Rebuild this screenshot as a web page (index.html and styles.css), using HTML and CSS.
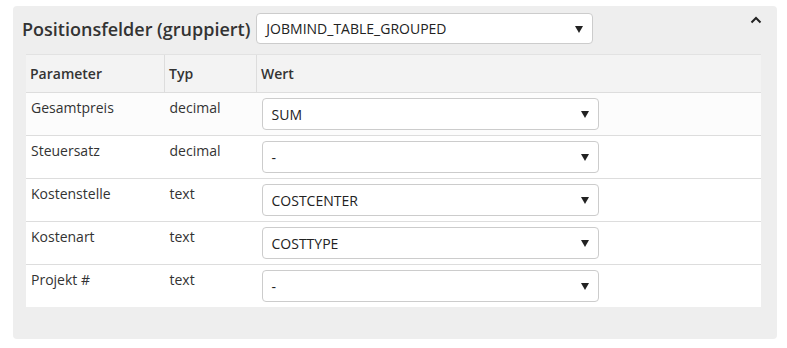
FILE: index.html
```html
<!DOCTYPE html>
<html>
	<head>
		<meta charset="UTF-8">
		<title>Positionsfelder</title>
		<link rel="stylesheet" href="styles.css">
	</head>
	<body>
		<div class="panel">
			<div class="panel-head">
				<h3>Positionsfelder (gruppiert)</h3>
				<div class="sel sel-wide">JOBMIND_TABLE_GROUPED<span class="arrow"></span></div>
				<svg class="toggle" width="12" height="8" viewBox="0 0 12 8">
					<path d="M1.5 6.5 L6 2 L10.5 6.5" fill="none" stroke="#222" stroke-width="2"/>
				</svg>
			</div>
			<table class="fields">
				<thead>
					<tr>
						<th class="c1">Parameter</th>
						<th class="c2">Typ</th>
						<th>Wert</th>
					</tr>
				</thead>
				<tbody>
					<tr>
						<td>Gesamtpreis</td>
						<td>decimal</td>
						<td><div class="sel">SUM<span class="arrow"></span></div></td>
					</tr>
					<tr>
						<td>Steuersatz</td>
						<td>decimal</td>
						<td><div class="sel">-<span class="arrow"></span></div></td>
					</tr>
					<tr>
						<td>Kostenstelle</td>
						<td>text</td>
						<td><div class="sel">COSTCENTER<span class="arrow"></span></div></td>
					</tr>
					<tr>
						<td>Kostenart</td>
						<td>text</td>
						<td><div class="sel">COSTTYPE<span class="arrow"></span></div></td>
					</tr>
					<tr>
						<td>Projekt #</td>
						<td>text</td>
						<td><div class="sel">-<span class="arrow"></span></div></td>
					</tr>
				</tbody>
			</table>
		</div>
	</body>
</html>
```

FILE: styles.css
```css
html{
	margin: 0;
	padding: 0;
}
body{
	margin: 0;
	padding: 0;
	background: #fff;
	font-family: "Open Sans", "Liberation Sans", sans-serif;
	font-size: 14px;
	color: #333;
}
.panel{
	margin: 6px 10px 0 13px;
	width: 764px;
	box-sizing: border-box;
	background: #eee;
	border-radius: 4px;
	padding: 7px 16px 32px 13px;
}
.panel-head{
	display: flex;
	align-items: center;
	margin-left: -4px;
	margin-bottom: 10px;
	position: relative;
}
.panel-head h3{
	margin: 0 6px 0 0;
	padding: 0;
	font-size: 18px;
	font-weight: 600;
	color: #333;
}
.toggle{
	position: absolute;
	right: -1px;
	top: 3px;
}
.sel{
	position: relative;
	width: 337px;
	height: 32px;
	box-sizing: border-box;
	background: #fff;
	border: 1px solid #ccc;
	border-radius: 4px;
	padding: 0 9px;
	line-height: 31px;
	font-size: 14px;
	color: #222;
}
.sel-wide{
	height: 31px;
	line-height: 30px;
}
.arrow{
	position: absolute;
	right: 9px;
	top: 50%;
	margin-top: -3px;
	width: 0;
	height: 0;
	border-left: 4px solid transparent;
	border-right: 4px solid transparent;
	border-top: 7px solid #222;
}
.fields{
	width: 735px;
	border-collapse: collapse;
	background: #fff;
}
.fields th{
	background: #f3f3f3;
	text-align: left;
	font-weight: 600;
	font-size: 14px;
	line-height: 20px;
	padding: 9px 5px 8px 4px;
	border-top: 1px solid #e2e2e2;
	border-bottom: 1px solid #ddd;
	border-left: 1px solid #ddd;
}
.fields th:first-child{
	border-left: none;
}
.fields th.c1{
	width: 129px;
}
.fields th.c2{
	width: 82px;
}
.fields td{
	vertical-align: top;
	line-height: 20px;
	padding: 5px 5px 5px;
	border-top: 1px solid #ddd;
}
.fields tbody tr:first-child td{
	border-top: none;
	background: #fcfcfc;
}
```
